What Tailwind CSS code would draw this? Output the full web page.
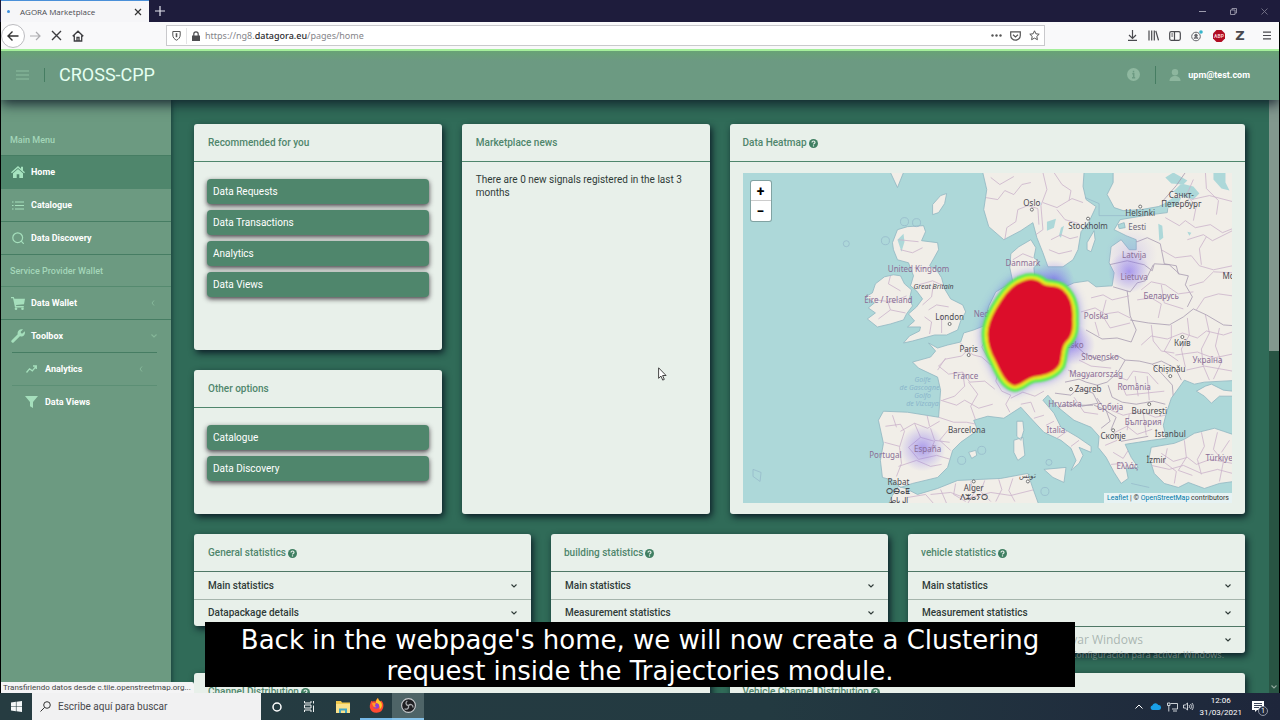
<!DOCTYPE html>
<html lang="en">

<head>
    <meta charset="UTF-8">
    <meta name="viewport" content="width=device-width, initial-scale=1.0">
    <title>AGORA Marketplace</title>
    <script src="https://cdn.jsdelivr.net/npm/@tailwindcss/browser@4"></script>
</head>

<body class="relative flex h-screen flex-col overflow-hidden bg-black font-['Roboto','Noto_Sans',sans-serif] text-[10px] leading-4">

    <!-- Shared icons -->
    <svg class="hidden">
        <symbol id="help" viewBox="0 0 9 9"><circle cx="4.500" cy="4.500" r="4.500" fill="#3f7f62" /><path d="M3 3.500c0-2 3-2 3 0 0 1-1.500 1-1.500 2M4.500 6.300v1.200" fill="none" stroke="#e8f0ea" stroke-width="1.200" /></symbol>
        <symbol id="down" viewBox="0 0 6 4"><path d="M.5.5L3 3 5.500.5" fill="none" stroke="currentColor" stroke-width="1.100" /></symbol>
        <symbol id="left" viewBox="0 0 4 6"><path d="M3 .5L1 3l2 2.500" fill="none" stroke="currentColor" /></symbol>
    </svg>

    <!-- Browser chrome -->
    <div class="flex h-[22px] shrink-0 items-stretch bg-[#1e1c3c] pl-px">
        <div class="flex w-[148px] items-center border-t border-[#4a90d9] bg-[#f6f6f8] pr-[7px] pl-1.5 text-[8px] text-[#4a4a50]">
            <span class="mr-[10px] size-[3px] rounded-full bg-[#3d8fe0]"></span>
            <span class="flex-1 font-['Open_Sans',sans-serif]">AGORA Marketplace</span>
            <button aria-label="Close tab">
                <svg class="size-2" viewBox="0 0 8 8" stroke="#333" stroke-width="1.2"><path d="M1 1l6 6M7 1l-6 6" /></svg>
            </button>
        </div>
        <button class="ml-1.5 self-center" aria-label="New tab">
            <svg class="size-[10px]" viewBox="0 0 10 10" stroke="#e4e4ee" stroke-width="1.2"><path d="M5 0v10M0 5h10" /></svg>
        </button>
        <div class="ml-auto flex items-center gap-6 pr-3">
            <svg class="size-[7px]" viewBox="0 0 7 7" stroke="#9c9bad"><path d="M0 3.5h7" /></svg>
            <svg class="size-[7px]" viewBox="0 0 7 7" fill="none" stroke="#9c9bad" stroke-width=".9"><path d="M.5 2h4.500v4.500H.5zM2 2V.5h4.500V5H5" /></svg>
            <svg class="size-[7px]" viewBox="0 0 7 7" stroke="#77768a" stroke-width=".9"><path d="M.5.5l6 6M6.500.5l-6 6" /></svg>
        </div>
    </div>
    <div class="mx-px flex h-[27px] shrink-0 items-center bg-[#f9f9fa] pr-2">
        <button class="flex size-[24px] items-center justify-center rounded-full border border-[#bcbcc0] bg-white" aria-label="Back">
            <svg class="size-3" viewBox="0 0 12 12" fill="none" stroke="#333" stroke-width="1.4"><path d="M11.500 6H1M5.500 1.500L1 6l4.500 4.500" /></svg>
        </button>
        <button class="ml-1" aria-label="Forward">
            <svg class="size-3" viewBox="0 0 12 12" fill="none" stroke="#adadb0" stroke-width="1.2"><path d="M1 6h10M7 2l4 4-4 4" /></svg>
        </button>
        <button class="ml-[10px]" aria-label="Stop">
            <svg class="size-[11px]" viewBox="0 0 11 11" stroke="#3d3d40" stroke-width="1.4"><path d="M1 1l9 9M10 1l-9 9" /></svg>
        </button>
        <button class="ml-[10px]" aria-label="Home page">
            <svg class="size-3" viewBox="0 0 12 12" fill="none" stroke="#3d3d40" stroke-width="1.3"><path d="M.7 6.300L6 1.200l5.300 5.100M2.300 5.500V11h7.400V5.500M5 11V7.500h2V11" /></svg>
        </button>
        <div class="ml-[82px] flex h-[21px] w-[879px] items-center border border-[#c9c9cc] bg-white px-1">
            <svg class="ml-px h-[11px] w-[9px]" viewBox="0 0 9 11" fill="none" stroke="#555"><path d="M.8 1.500h7.400V5c0 2.500-1.700 4.300-3.700 5.200C2.500 9.300.8 7.500.8 5z" /><path d="M4.500 3.200v4" stroke-width="1.600" /></svg>
            <span class="mx-[5px] h-4 w-px bg-[#e4e4e6]"></span>
            <svg class="h-[10px] w-2" viewBox="0 0 8 10"><path d="M0 4.500h8V10H0z" fill="#4d4d50" /><path d="M1.800 5V3a2.200 2.200 0 014.400 0v2" fill="none" stroke="#4d4d50" stroke-width="1.200" /></svg>
            <div role="textbox" aria-label="Address" class="ml-[5px] flex-1 font-['Noto_Sans',sans-serif] text-[9px] text-[#85858a]">https://ng8.<span class="font-medium text-[#2a2a2e]">datagora.eu</span>/pages/home</div>
            <svg class="h-[3px] w-[11px]" viewBox="0 0 11 3" fill="#555"><circle cx="1.500" cy="1.500" r="1.200" /><circle cx="5.500" cy="1.500" r="1.200" /><circle cx="9.500" cy="1.500" r="1.200" /></svg>
            <svg class="ml-2 h-[10px] w-[11px]" viewBox="0 0 11 10" fill="none" stroke="#555" stroke-width="1.200"><path d="M.7.8h9.600v3.700a4.800 4.600 0 01-9.600 0zM3 3.700l2.500 2.200L8 3.700" /></svg>
            <svg class="ml-2 size-[11px]" viewBox="0 0 11 11" fill="none" stroke="#555" stroke-linejoin="round"><path d="M5.500.8l1.400 3 3.300.4-2.400 2.200.6 3.300-2.900-1.600-2.900 1.600.6-3.300L.8 4.200l3.300-.4z" /></svg>
        </div>
        <div class="ml-auto flex items-center gap-[10px]">
            <svg class="size-[11px]" viewBox="0 0 11 11" fill="none" stroke="#4a4a4f" stroke-width="1.200"><path d="M5.500 0v8M2 5l3.500 3.500L9 5M1 10.300h9" /></svg>
            <svg class="size-[11px]" viewBox="0 0 11 11" fill="none" stroke="#4a4a4f" stroke-width="1.200"><path d="M1 .5v10M3.700.5v10M6.300.5v10M7.800.8l2.700 9.500" /></svg>
            <svg class="h-[10px] w-3" viewBox="0 0 12 10" fill="none" stroke="#4a4a4f" stroke-width="1.200"><rect x=".7" y=".7" width="10.600" height="8.600" rx="1.500" /><path d="M5.500 1v8M2.300 3h1.800M2.300 5h1.800" /></svg>
            <svg class="size-3" viewBox="0 0 12 12" fill="none" stroke="#66666b"><circle cx="5" cy="6.500" r="4.300" /><circle cx="5" cy="5.500" r="1.300" fill="#66666b" /><path d="M3 8.500c.8-1 3.200-1 4 0" stroke-width="1.300" /><circle cx="10" cy="2" r="1.800" fill="#35b5cc" stroke="none" /></svg>
            <svg class="size-3" viewBox="0 0 12 12"><path d="M3.500 0h5L12 3.500v5L8.500 12h-5L0 8.500v-5z" fill="#b00c22" /><text x="6" y="8" text-anchor="middle" font-size="5" font-weight="700" fill="#f6c8cc">ABP</text></svg>
            <span class="w-[10px] text-center font-['DejaVu_Sans',sans-serif] text-[13px] font-bold text-[#4a4a4f]">Z</span>
            <svg class="ml-2 h-[9px] w-2" viewBox="0 0 8 9" stroke="#4a4a4f" stroke-width="1.200"><path d="M0 1.200h8M0 4.500h8M0 7.800h8" /></svg>
        </div>
    </div>

    <!-- Web page -->
    <div class="relative mx-px flex min-h-0 flex-1 flex-col overflow-hidden bg-[#306b58]">
        <header class="relative z-10 flex h-[51px] shrink-0 items-center border-t-2 border-[#a5ef9b] bg-linear-to-b from-[#68a374] to-[#6c9a82] to-20% pr-[29px] pb-[2px] pl-[15px] shadow-[0_4px_12px_rgba(10,20,35,.85)]">
            <button aria-label="Toggle menu">
                <svg class="h-[10px] w-[13px]" viewBox="0 0 13 10" stroke="#8bbd9f" stroke-width="1.200"><path d="M0 1h13M0 5h13M0 9h13" /></svg>
            </button>
            <span class="mr-[14px] ml-[15px] h-3.5 w-px bg-[#467d62]"></span>
            <a href="#" class="text-[18px] leading-6 text-[#e4fff0]">CROSS-CPP</a>
            <div class="ml-auto flex items-center">
                <svg class="size-[13px]" viewBox="0 0 13 13"><circle cx="6.500" cy="6.500" r="6.500" fill="#8fb8a0" /><path d="M6.500 2.800v1.700M5.300 5.800h1.400v4M5 9.800h3.200" stroke="#6c9a82" stroke-width="1.500" fill="none" /></svg>
                <span class="mr-[13px] ml-[15px] h-[18px] w-px bg-[#467d62]"></span>
                <svg class="size-3" viewBox="0 0 12 12" fill="#8db69e"><circle cx="6" cy="3.300" r="3.200" /><path d="M.5 12C.5 8.500 3 7 6 7s5.500 1.500 5.500 5z" /></svg>
                <a href="#" class="ml-[7px] text-[9px] font-bold text-white">upm@test.com</a>
            </div>
        </header>

        <div class="flex min-h-0 flex-1">
            <nav class="w-[170px] shrink-0 bg-[#6c9a81] pt-6 text-[9px] font-bold text-white shadow-[1px_0_5px_rgba(10,30,40,.6)]">
                <div class="flex h-8 items-center border-b border-[#467d63] pl-[9px] font-medium text-[#a4d6b9]">Main Menu</div>
                <a href="#" class="flex h-[33px] items-center border-b border-[#4f866c] bg-[#4f866c] pl-[10px]">
                    <svg class="mr-[6px] h-3 w-[14px]" viewBox="0 0 14 12" fill="#a5e3bf"><path d="M7 0L0 6.200l.9 1L7 1.900l6.100 5.300.9-1-2-1.800V.8h-2v1.900z" /><path d="M7 2.900L2 7.300V12h3.700V8.300h2.600V12H12V7.300z" /></svg>
                    Home
                </a>
                <a href="#" class="flex h-[33px] items-center border-b border-[#467d63] pl-[11px]">
                    <svg class="mr-[7px] h-[9px] w-3" viewBox="0 0 12 9" stroke="#a5dfbc"><path d="M0 1h1.500M3 1h9M0 4.500h1.500M3 4.500h9M0 8h1.500M3 8h9" /></svg>
                    Catalogue
                </a>
                <a href="#" class="flex h-[33px] items-center border-b border-[#467d63] pl-[11px]">
                    <svg class="mr-[7px] size-3" viewBox="0 0 12 12" fill="none" stroke="#a5dfbc" stroke-width="1.200"><circle cx="5.700" cy="5.700" r="4.900" /><path d="M9.200 9.200l2.600 2.600" /></svg>
                    Data Discovery
                </a>
                <div class="flex h-8 items-center border-b border-[#558a6f] pl-[9px] font-medium text-[#a4d6b9]">Service Provider Wallet</div>
                <a href="#" class="flex h-[33px] items-center border-b border-[#467d63] pr-4 pl-[10px]">
                    <svg class="mr-[6px] size-[14px]" viewBox="0 0 14 14" fill="#a5dfbc"><path d="M0 1h2.800l.6 1.700H14l-1 5.500-8 .9.300 1h7.500v1.300H4L2 2.300H0z" /><circle cx="5" cy="12.700" r="1.300" /><circle cx="11.500" cy="12.700" r="1.300" /></svg>
                    Data Wallet
                    <svg class="ml-auto h-[6px] w-1 text-[#86b799]"><use href="#left" /></svg>
                </a>
                <a href="#" class="flex h-8 items-center pr-[14px] pl-[10px]">
                    <svg class="mr-[6px] size-[14px]" viewBox="0 0 14 14"><path d="M1.800 12.200l6-6" stroke="#a5dfbc" stroke-width="3" stroke-linecap="round" /><path d="M12 .5L9.700 2.800l.3 1.500 1.500.3L13.700 2.300c.8 2-.2 4.200-2 5-2 .8-4.300-.2-5-2C5.900 2.500 8.500-.5 12 .5z" fill="#a5dfbc" /></svg>
                    Toolbox
                    <svg class="ml-auto h-1 w-[6px] text-[#86b799]"><use href="#down" /></svg>
                </a>
                <div class="mr-[14px] ml-[11px] border-t border-[#467d63]">
                    <a href="#" class="flex h-[33px] items-center border-b border-[#5c8f75] pr-[14px] pl-[14px]">
                        <svg class="mr-2 h-2 w-[11px]" viewBox="0 0 11 8" fill="none" stroke="#a5dfbc" stroke-width="1.300"><path d="M.5 7.500L3.500 3.800l2.800 2L10 1.500M7 1h3.300v3" /></svg>
                        Analytics
                        <svg class="ml-auto h-[6px] w-1 text-[#86b799]"><use href="#left" /></svg>
                    </a>
                    <a href="#" class="flex h-8 items-center pl-[13px]">
                        <svg class="mr-[7px] h-3 w-[13px]" viewBox="0 0 13 12" fill="#a5dfbc"><path d="M0 0h13L8 6v6L5 10.300V6z" /></svg>
                        Data Views
                    </a>
                </div>
            </nav>

            <main class="min-w-0 flex-1 space-y-5 overflow-hidden pt-6 pr-6 pl-[23px] text-[#2f3b38]">
                <div class="grid grid-cols-4 gap-5">
                    <div class="flex flex-col gap-5">
                        <section class="h-[226px] rounded-[3px] bg-[#e8f0ea] shadow-[2px_3px_7px_rgba(8,20,32,.9)]">
                            <h2 class="border-b border-[#4f866c] px-[14px] pt-[11px] pb-[10px] font-medium text-[#4f866c]">Recommended for you</h2>
                            <div class="space-y-[6px] px-[13px] pt-[17px] text-white">
                                <button class="block h-[25px] w-full rounded-[4px] bg-[#4f866c] px-[6px] text-left shadow-[0_2px_5px_rgba(30,20,30,.8)]">Data Requests</button>
                                <button class="block h-[25px] w-full rounded-[4px] bg-[#4f866c] px-[6px] text-left shadow-[0_2px_5px_rgba(30,20,30,.8)]">Data Transactions</button>
                                <button class="block h-[25px] w-full rounded-[4px] bg-[#4f866c] px-[6px] text-left shadow-[0_2px_5px_rgba(30,20,30,.8)]">Analytics</button>
                                <button class="block h-[25px] w-full rounded-[4px] bg-[#4f866c] px-[6px] text-left shadow-[0_2px_5px_rgba(30,20,30,.8)]">Data Views</button>
                            </div>
                        </section>
                        <section class="h-[144px] rounded-[3px] bg-[#e8f0ea] shadow-[2px_3px_7px_rgba(8,20,32,.9)]">
                            <h2 class="border-b border-[#4f866c] px-[14px] pt-[11px] pb-[10px] font-medium text-[#4f866c]">Other options</h2>
                            <div class="space-y-[6px] px-[13px] pt-[17px] text-white">
                                <button class="block h-[25px] w-full rounded-[4px] bg-[#4f866c] px-[6px] text-left shadow-[0_2px_5px_rgba(30,20,30,.8)]">Catalogue</button>
                                <button class="block h-[25px] w-full rounded-[4px] bg-[#4f866c] px-[6px] text-left shadow-[0_2px_5px_rgba(30,20,30,.8)]">Data Discovery</button>
                            </div>
                        </section>
                    </div>
                    <section class="rounded-[3px] bg-[#e8f0ea] shadow-[2px_3px_7px_rgba(8,20,32,.9)]">
                        <h2 class="border-b border-[#4f866c] px-[14px] pt-[11px] pb-[10px] font-medium text-[#4f866c]">Marketplace news</h2>
                        <p class="px-[14px] pt-[11px] leading-[13px]">There are 0 new signals registered in the last 3 months</p>
                    </section>
                    <section class="col-span-2 rounded-[3px] bg-[#e8f0ea] shadow-[2px_3px_7px_rgba(8,20,32,.9)]">
                        <h2 class="flex items-center gap-[2px] border-b border-[#4f866c] px-[13px] pt-[11px] pb-[10px] font-medium text-[#4f866c]">Data Heatmap <svg class="size-[9px]"><use href="#help" /></svg></h2>
                        <div class="relative mx-[13px] mt-[11px] h-[330px] overflow-hidden bg-[#add8d9]">
                            <svg class="h-full w-full" viewBox="743 173 488 330" preserveAspectRatio="xMidYMid slice" font-family="'Noto Sans', sans-serif" font-size="8">
                                <defs>
                                    <filter id="soft" x="-20%" y="-20%" width="140%" height="140%"><feGaussianBlur stdDeviation="1.200" /></filter>
                                    <filter id="glow" x="-30%" y="-30%" width="160%" height="160%"><feGaussianBlur stdDeviation="4" /></filter>
                                    <radialGradient id="spot"><stop offset="0" stop-color="#7c64ee" stop-opacity=".6" /><stop offset="1" stop-color="#8a78f0" stop-opacity="0" /></radialGradient>
                                    <clipPath id="landClip"><use href="#land" /></clipPath>
                                    <path id="heat" d="M1021 280C1028 277 1037 277 1043 283C1049 286 1056 283 1063 289C1071 296 1074 307 1073 320C1074 331 1072 338 1066 343C1061 348 1063 357 1060 365C1055 374 1045 377 1034 378C1026 379 1022 386 1014 387C1004 386 998 372 993 361C987 350 984 340 986 328C988 317 993 309 999 300C1005 291 1012 283 1021 280Z" />
                                </defs>
                                <!-- land masses -->
                                <path id="land" fill="#f1eee8" stroke="#91b6c2" stroke-width=".8" stroke-linejoin="round" d="M897 230L907 227L923 226L925 232L921 241L937 243L938 250L933 259L929 266L936 270L941 278L944 289L950 299L962 305L965 312L960 321L957 330L946 335L934 335L923 338L912 341L903 343L909 336L919 331L920 327L907 327L914 321L908 314L916 307L922 299L916 291L910 286L913 276L908 263L897 260L893 250L892 243ZM893 275L900 276L904 284L911 290L909 299L912 306L906 314L903 320L890 324L877 327L867 319L875 313L868 308L874 303L865 297L872 293L875 284L884 277ZM932 205L940 196L946 194L944 204L938 213L932 215ZM982 173L986 190L983 210L988 227L1003 240L1020 231L1032 223L1036 238L1042 253L1047 267L1062 267L1072 260L1077 250L1080 232L1088 222L1095 207L1085 200L1082 187L1083 173ZM1112 173L1112 183L1106 195L1113 208L1122 211L1140 210L1157 207L1167 203L1166 213L1150 215L1137 217L1119 220L1113 230L1125 236L1135 240L1135 250L1128 250L1120 240L1110 247L1108 263L1113 273L1111 286L1095 287L1087 281L1073 283L1062 288L1045 285L1034 280L1033 268L1038 262L1033 258L1035 248L1030 240L1018 247L1010 254L1009 268L1012 282L995 292L988 306L983 326L973 330L963 333L960 342L947 345L937 348L928 343L935 351L930 357L912 362L918 368L937 377L940 390L938 417L907 412L883 411L878 420L883 443L880 460L882 477L893 480L900 487L912 483L937 477L947 467L952 450L960 442L977 430L973 420L987 416L1003 418L1020 407L1029 417L1043 432L1060 440L1070 448L1075 460L1070 470L1078 463L1082 455L1078 447L1090 452L1090 446L1077 437L1060 427L1053 413L1042 400L1047 395L1057 407L1073 420L1090 427L1098 436L1097 447L1105 457L1113 472L1120 483L1127 478L1125 468L1137 467L1130 457L1124 444L1137 442L1150 440L1165 438L1162 425L1165 413L1170 398L1183 380L1193 384L1203 382L1240 380V173ZM1195 391L1204 386L1210 384L1222 390L1240 392L1240 396L1218 396L1210 403L1203 396ZM1240 437L1222 431L1213 428L1193 433L1183 439L1173 443L1150 447L1148 457L1153 473L1163 483L1177 487L1187 482L1203 488L1218 483L1240 480ZM1043 469L1065 467L1063 482L1052 477ZM1016 421L1022 421L1023 430L1020 440L1016 436ZM1013 440L1022 437L1024 455L1017 460L1013 452ZM885 510L892 495L898 486L905 488L917 494L937 488L957 480L1000 478L1027 473L1030 482L1032 488L1040 510ZM968 452L975 450L976 455L971 458ZM1086 243L1093 231L1094 240L1090 252L1086 250ZM890 173L897 188L903 173ZM1117 225L1123 223L1124 228L1118 229Z" />
                                <!-- coastal waters and lakes -->
                                <path fill="#add8d9" d="M1164 178l8-5 14 8-4 4-12-1zM1212 173h12v10l4 8-8-2-8-9zM1157 224l4 2 1 12-4 3zM1186 232l4 1-2 3zM1046 222l9-3-2 9-7 3zM1060 228l3-2-3 12-2-2zM1172 192l8-8 12 3 6 7-6 6-12-3zM897 240l6-6 1 8-3 10zM1160 206l12-8 8 0-4 8-10 3z" />
                                <g clip-path="url(#landClip)" fill="none" stroke="#cbb3cb" stroke-width=".8" stroke-linejoin="round">
                                    <path d="M985 198l12 2 7-9 9 4 8-10 9-2M1004 240l2-12 9-6 2-12 10-4 10 3 1 16M1042 173l4 17-6 16 2 24-7 5M1042 203l14 5 15-9 11 4M1050 240l10-5 9 4 8-2M1048 250l10 4 13-3M1056 210l8 10 14 4M1053 173l8 12 9 6-2 10M990 178l9 7 14-8M1012 260l10-6 10 4" />
                                    <path stroke="#a89bb0" d="M1184 173l-9 13-14 16M1108 265l18-4 17 4 8 6 2-7 15 1 10 9M1120 240l16 2 10-4 13 6 4 20 12 2 2 8 10 2-3 9 7 12-5 10M1112 287l17 5 7-9 8-2 8-16M1126 291l3 25 6 14-5 12-14-4-15 1-16-9M1129 320l18 3 21 2 14-8 10-8 13 6 17 10 14 1M1061 350l13-5 10 9 17 7 16-5 7 4-7 12-11 10-10 3-11-3-7-3-14 3M1124 360l14 1 13 3 10 10 10 11 1 12M1151 364l9-3 14 7 6 12M1107 385l4 12 10 5 14 2 17-3 12 3M1096 398l8 12 11 7-5 12 10 12 27-5M1093 405l12 5 4 11-9 7M1054 393l16 2 7-7 15 5 5 10-16 3M1057 407l9-2 26 0" />
                                    <path d="M1160 250l14 8 16-2 8 10 14 4 19-4M1164 218l14 8 6-5 10 7 15-3 12 8 10-4M1192 180l-7 16 10 10-3 15M1204 173l1 16 12 12-2 14M1190 200l18-4 23 6M1186 240l16-5 9 6 20-10M1200 265l-2-16 7-12M1188 286l14-4 10-10 19 1M1195 310l8-12 14-4 14 2M1090 298l12-3 9 5 17-4M1080 312l14-4 10 6 13-2 12 6M1094 322l4 14M1105 300l-4 15 8 13 20-5M1140 290l10-8 14 3 13 9 15-2M1136 300l14-2 10 6-3 14M1160 285l3 18 19 6M1140 345l10-9 16 3 15-6 15 5 9-7 17 4 9-3M1150 325l2 16 8 10 13 2M1170 325l0 13-7 13 14 10M1186 318l2 17-8 14 4 18M1204 315l4 18-8 16 2 17 6 14M1218 328l-4 18 6 16-8 17M1174 355l22-3 16 6 19-4M1185 370l18-4 28 5M1112 375l14 5 6-9 15 2 10 11M1120 383l5 12M1134 376l3 20M1146 376l2 24M1125 395l38-4M1110 410l12 5 17-4 15 6 10-2M1128 414l-2 16M1142 412l3 23M1114 432l12-6 10 8 15-5M1073 397l10 15 14 2M1078 360l12 6 20 2M1067 370l15 6 15 0" />
                                    <path d="M960 343l6 8 7 4 8 2 8 7 10 3-4 14 6 10 9 4-5 9 4 8M969 348l-8 8-16 3-7 7 10 8 14-2 7 10 15-1 10 8M945 358l-8 12M962 372l2 14-10 10-12 4M968 382l9 12-7 12 5 14M940 400l16 5 8-5 14 8 14-4M938 417l15 5 13 0 10 2M885 426l15-2 4 7-5 16 2 16-5 13M884 442l15 4M900 431l14-8 13 5 12-7M914 423l6 14-12 10 10 12 18-4 14 4M930 428l4 12 15 2M898 466l18-6 14 6 11-2M920 437l14 4-6 12M949 428l-10 12 11 10M892 415l4 12M926 413l3 13M900 250l12 3 10-5M898 240l20 2M914 268l14 0M918 285l14-4 9 4M922 305l9-8 2-14M928 310l8-5 12 2M929 334l2-12-7-5M941 333l0-17M890 276l-2 8 12 7M874 300l18 2 14-6M878 319l12-9 15 3M890 310l-4-12M1010 398l12-6 12 4 9-5M1020 404l10-2 4 10M1033 418l10-3M1045 425l8-4M1056 438l10-7M1070 446l8-6M988 315l-6 8 5 12-6 12 8 14" />
                                    <path d="M907 497l18-3 8 9M940 489l6 14M955 483l-2 11 12 7M970 481l3 12-6 10M984 480l-4 11 10 10M998 479l3 10-6 12M1012 478l-4 12 6 11M930 494l20-2 16 6 24-6 20 3 24-6M1160 453l12 8 14-4 9 7 14-5 22 4M1166 448l-3 14 12 9-2 12M1183 440l2 17-8 13 14 5M1200 432l3 14-7 13 4 15M1216 432l-4 17 10 12-4 20M1150 465l18 4 14-4 18 8 16-4 15 4M1228 440l-8 12M1112 452l10 6 5-8M1110 464l12-1M1104 445l12-5" />
                                </g>
                                <g fill="none" stroke="#94b6c8" stroke-width=".7">
                                    <circle cx="846" cy="244" r="3" /><circle cx="904" cy="222" r="4" /><circle cx="916" cy="223" r="4" /><circle cx="885" cy="241" r="4" /><circle cx="961" cy="460" r="4" /><circle cx="981" cy="450" r="4" /><circle cx="1044" cy="491" r="4" /><circle cx="1048" cy="462" r="3" /><path d="M753 469l8 3-1 9-7-5zM1084 198l14 6 0 12M1098 216h32M1130 483l18 4M1148 495l12-2" />
                                </g>
                                <!-- heat layer -->
                                <circle cx="1128" cy="272" r="21" fill="url(#spot)" />
                                <circle cx="1130" cy="255" r="26" fill="url(#spot)" opacity=".35" />
                                <circle cx="922" cy="448" r="23" fill="url(#spot)" />
                                <circle cx="1074" cy="345" r="20" fill="url(#spot)" />
                                <circle cx="1053" cy="280" r="20" fill="url(#spot)" />
                                <g fill="#8a6f96">
                                    <text x="1060" y="348">Česko</text>
                                    <text x="973" y="317">Ned</text>
                                </g>
                                <use href="#heat" fill="#5c4de0" stroke="#5c5ae8" stroke-width="11" opacity=".5" filter="url(#glow)" />
                                <g filter="url(#soft)" stroke-linejoin="round">
                                    <use href="#heat" fill="none" stroke="#56f04e" stroke-width="9" />
                                    <use href="#heat" fill="#dc0a2b" stroke="#e8ec1c" stroke-width="3" />
                                </g>
                                <!-- labels -->
                                <g text-anchor="middle" fill="#8a6f96">
                                    <text x="918" y="272">United Kingdom</text>
                                    <text x="888" y="303">Éire / Ireland</text>
                                    <text x="1022" y="266">Danmark</text>
                                    <text x="1136" y="230" fill="#6d6878">Eesti</text>
                                    <text x="1133" y="258">Latvija</text>
                                    <text x="1133" y="280">Lietuva</text>
                                    <text x="1160" y="299">Беларусь</text>
                                    <text x="1095" y="319">Polska</text>
                                    <text x="965" y="379">France</text>
                                    <text x="927" y="452">España</text>
                                    <text x="885" y="458">Portugal</text>
                                    <text x="1099" y="360">Slovensko</text>
                                    <text x="1095" y="377">Magyarország</text>
                                    <text x="1133" y="390">România</text>
                                    <text x="1206" y="363">Україна</text>
                                    <text x="1064" y="407">Hrvatska</text>
                                    <text x="1109" y="410">Србија</text>
                                    <text x="1142" y="425">България</text>
                                    <text x="1055" y="433">Italia</text>
                                    <text x="1126" y="469">Ελλάς</text>
                                    <text x="1204" y="461" text-anchor="start">Türkiye</text>
                                </g>
                                <g text-anchor="middle" fill="#4a4a50">
                                    <text x="1031" y="206">Oslo</text>
                                    <text x="1087" y="229">Stockholm</text>
                                    <text x="1139" y="216">Helsinki</text>
                                    <text x="1180" y="198">Санкт-</text>
                                    <text x="1180" y="207">Петербург</text>
                                    <text x="1221" y="279" text-anchor="start">Мо</text>
                                    <text x="933" y="289" font-style="italic" font-size="7">Great Britain</text>
                                    <text x="949" y="320">London</text>
                                    <text x="968" y="352">Paris</text>
                                    <text x="966" y="433">Barcelona</text>
                                    <text x="898" y="485">Rabat</text>
                                    <text x="898" y="494">ⵔⴱⴰⵟ</text>
                                    <text x="898" y="503">الرباط</text>
                                    <text x="973" y="491">Alger</text>
                                    <text x="973" y="500">ⴷⵣⴰⵢⵔ</text>
                                    <text x="1027" y="478" font-size="7">تونس</text>
                                    <text x="1087" y="392">Zagreb</text>
                                    <text x="1181" y="346">Київ</text>
                                    <text x="1168" y="372">Chișinău</text>
                                    <text x="1148" y="414">București</text>
                                    <text x="1112" y="439">Скопје</text>
                                    <text x="1169" y="437">İstanbul</text>
                                    <text x="1155" y="463">İzmir</text>
                                </g>
                                <g text-anchor="middle" fill="#8ab5cb" font-style="italic" font-size="7">
                                    <text x="922" y="382">Golfe</text><text x="919" y="390">de Gascogne</text><text x="922" y="398">Golfo</text><text x="922" y="406">de Vizcaya</text>
                                </g>
                                <g fill="#fff" stroke="#555" stroke-width=".8">
                                    <circle cx="1031" cy="210" r="1.500" /><circle cx="1087" cy="219" r="1.500" /><circle cx="1139" cy="207" r="1.500" /><circle cx="949" cy="324" r="1.500" /><circle cx="968" cy="355" r="1.500" /><circle cx="1181" cy="337" r="1.500" /><circle cx="1169" cy="376" r="1.500" /><circle cx="1148" cy="404" r="1.500" /><circle cx="1112" cy="430" r="1.500" /><circle cx="1070" cy="389" r="1.500" /><circle cx="973" cy="481" r="1.500" /><circle cx="1027" cy="481" r="1.500" />
                                </g>
                            </svg>
                            <div class="absolute top-2 left-2 flex w-5 flex-col rounded-[2px] bg-white text-center text-[14px] leading-5 font-bold text-black shadow-[0_0_0_1px_rgba(0,0,0,.25)]">
                                <button class="h-5 border-b border-[#ccc]" aria-label="Zoom in">+</button>
                                <button class="h-5" aria-label="Zoom out">−</button>
                            </div>
                            <div class="absolute right-0 bottom-0 bg-white/70 px-[3px] text-[7px] leading-[10px] text-[#333]"><a href="#" class="text-[#0078a8]">Leaflet</a> | © <a href="#" class="text-[#0078a8]">OpenStreetMap</a> contributors</div>
                        </div>
                    </section>
                </div>

                <div class="grid grid-cols-3 items-start gap-5">
                    <section class="rounded-[3px] bg-[#e8f0ea] font-medium shadow-[2px_3px_7px_rgba(8,20,32,.9)]">
                        <h2 class="flex items-center gap-[2px] px-[14px] pt-[11px] pb-[10px] text-[#4f866c]">General statistics <svg class="size-[9px]"><use href="#help" /></svg></h2>
                        <button class="flex h-[28px] w-full items-center justify-between border-t border-[#4f7766] px-[14px]">Main statistics <svg class="h-1 w-[6px]"><use href="#down" /></svg></button>
                        <button class="flex h-[27px] w-full items-center justify-between border-t border-[#a5b5ac] px-[14px]">Datapackage details <svg class="h-1 w-[6px]"><use href="#down" /></svg></button>
                    </section>
                    <section class="rounded-[3px] bg-[#e8f0ea] font-medium shadow-[2px_3px_7px_rgba(8,20,32,.9)]">
                        <h2 class="flex items-center gap-[2px] px-[13px] pt-[11px] pb-[10px] text-[#4f866c]">building statistics <svg class="size-[9px]"><use href="#help" /></svg></h2>
                        <button class="flex h-[28px] w-full items-center justify-between border-t border-[#4f7766] px-[14px]">Main statistics <svg class="h-1 w-[6px]"><use href="#down" /></svg></button>
                        <button class="flex h-[27px] w-full items-center justify-between border-t border-[#a5b5ac] px-[14px]">Measurement statistics <svg class="h-1 w-[6px]"><use href="#down" /></svg></button>
                    </section>
                    <section class="rounded-[3px] bg-[#e8f0ea] font-medium shadow-[2px_3px_7px_rgba(8,20,32,.9)]">
                        <h2 class="flex items-center gap-[2px] px-[13px] pt-[11px] pb-[10px] text-[#4f866c]">vehicle statistics <svg class="size-[9px]"><use href="#help" /></svg></h2>
                        <button class="flex h-[28px] w-full items-center justify-between border-t border-[#4f7766] px-[14px]">Main statistics <svg class="h-1 w-[6px]"><use href="#down" /></svg></button>
                        <button class="flex h-[27px] w-full items-center justify-between border-t border-[#a5b5ac] px-[14px]">Measurement statistics <svg class="h-1 w-[6px]"><use href="#down" /></svg></button>
                        <button class="flex h-[27px] w-full items-center justify-end border-t border-[#4f7766] px-[14px]" aria-label="More statistics"><svg class="h-1 w-[6px]"><use href="#down" /></svg></button>
                    </section>
                </div>

                <div class="grid grid-cols-2 gap-5">
                    <section class="h-[200px] rounded-[3px] bg-[#e8f0ea] shadow-[2px_3px_7px_rgba(8,20,32,.9)]">
                        <h2 class="flex items-center gap-[2px] px-[14px] pt-[11px] pb-[10px] font-medium text-[#4f866c]">Channel Distribution <svg class="size-[9px]"><use href="#help" /></svg></h2>
                    </section>
                    <section class="h-[200px] rounded-[3px] bg-[#e8f0ea] shadow-[2px_3px_7px_rgba(8,20,32,.9)]">
                        <h2 class="flex items-center gap-[2px] px-[13px] pt-[11px] pb-[10px] font-medium text-[#4f866c]">Vehicle Channel Distribution <svg class="size-[9px]"><use href="#help" /></svg></h2>
                    </section>
                </div>
            </main>

            <!-- Scrollbar -->
            <div class="flex w-[10px] shrink-0 flex-col items-center justify-between bg-[#285443] pb-1">
                <div class="h-[251px] w-full bg-[#82988e]"></div>
                <svg class="h-1 w-[6px] text-[#8fa89c]"><use href="#down" /></svg>
            </div>
        </div>
        <div class="absolute bottom-0 left-0 z-20 h-[11px] rounded-tr-[2px] bg-[#f4f4f5] pr-[3px] pl-[2px] text-[8px] leading-[11px] text-[#444]">Transfiriendo datos desde c.tile.openstreetmap.org...</div>
    </div>

    <!-- Taskbar -->
    <div class="flex h-[27px] shrink-0 items-stretch bg-linear-to-r from-[#263c41] via-[#233a41] via-60% to-[#1e263b] pr-4">
        <button class="flex w-8 items-center justify-center" aria-label="Start">
            <svg class="size-[11px]" viewBox="0 0 11 11" fill="#f4f8f8"><path d="M0 1.500l4.900-.7v4.400H0zM5.500.7L11 0v5.200H5.500zM0 5.800h4.900v4.400L0 9.500zM5.500 5.800H11V11l-5.500-.8z" /></svg>
        </button>
        <div class="flex w-[229px] items-center bg-[#f1f1f2] pl-2">
            <svg class="mr-[7px] size-[11px] shrink-0" viewBox="0 0 11 11" fill="none" stroke="#333"><circle cx="7" cy="4" r="3.300" /><path d="M4.600 6.400L.5 10.500" /></svg>
            <input type="text" aria-label="Buscar" placeholder="Escribe aquí para buscar" class="w-full outline-none placeholder:text-[#48484c]">
        </div>
        <button class="flex w-8 items-center justify-center" aria-label="Cortana"><svg class="size-[10px]" viewBox="0 0 10 10" fill="none" stroke="#fff" stroke-width="1.500"><circle cx="5" cy="5" r="4" /></svg></button>
        <button class="flex w-8 items-center justify-center" aria-label="Task view"><svg class="size-[11px]" viewBox="0 0 11 11" fill="none" stroke="#eef2f2"><path d="M.5 0v2h6.500V0M.5 11V9h6.500v2M.5 4h6.500v3H.5zM9.500 0v2.500M9.500 4.500V11" /></svg></button>
        <button class="flex w-[35px] items-center justify-center" aria-label="File explorer"><svg class="h-3 w-[14px]" viewBox="0 0 14 12"><path d="M0 0h5l1 1.500h8V12H0z" fill="#f2c94c" /><path d="M0 3h14v9H0z" fill="#fbe28a" /><path d="M3 7.500h8V12H9V9.500H5V12H3z" fill="#45a7c4" /></svg></button>
        <button class="flex w-8 items-center justify-center border-b-2 border-[#76b9e8]" aria-label="Firefox"><svg class="size-[15px]" viewBox="0 0 15 15"><path d="M1.500 5C2 2.500 3 2 3 3.500c1.500-.5 2-.5 3.500 0C6.700 2 8 .8 9 0c.2 1.700 1 2.300 2.500 3.500.5-.2.5-.7.400-1.200C14 4 14.800 6.500 14.300 9A6.900 6.900 0 01.8 9.500C.6 8 .9 6.500 1.500 5z" fill="#ff4a32" /><path d="M9 0c.2 1.700 1 2.300 2.500 3.500 2.500 3 1.500 6.500-1 8 1-3-1-6-3.500-6.500C7 3 7.700 1 9 0z" fill="#ffc928" /><circle cx="7.300" cy="8" r="2.800" fill="#8f40d8" /><path d="M3 5c2-.5 3 .3 4.500 1-2 0-2 2.500 0 3-2 1-4-.5-4.500-4z" fill="#ff9b28" /></svg></button>
        <button class="flex w-8 items-center justify-center border-b-2 border-[#86c3ea] bg-[#4e6467]" aria-label="OBS Studio"><svg class="size-[15px]" viewBox="0 0 15 15"><circle cx="7.500" cy="7.500" r="6.900" fill="#1f1f22" stroke="#c9cccf" stroke-width="1.100" /><g fill="none" stroke="#a9acaf" stroke-width="1.300"><path d="M7.500 7.500C4.500 7 4.300 4.200 6.300 3M7.500 7.500c2.200-2 4.700-.6 4.500 2M7.500 7.500c.7 3-1.800 4.500-4 3.200" /></g></svg></button>
        <div class="ml-auto flex items-center text-[8px] text-white">
            <svg class="mr-[7px] h-[5px] w-2" viewBox="0 0 8 5" fill="none" stroke="#fff"><path d="M.5 4.500L4 1l3.500 3.500" /></svg>
            <svg class="mr-[6px] h-[7px] w-[11px]" viewBox="0 0 11 7" fill="#1aa0e8"><path d="M2.500 7a2.300 2.300 0 01-.2-4.500A3.300 3.300 0 018.300 2 2.500 2.500 0 018.700 7z" /></svg>
            <svg class="mr-[5px] h-[10px] w-[11px]" viewBox="0 0 11 10" fill="none" stroke="#dfe3e8" stroke-width=".9"><path d="M3.500 1.500h7v5.500H5M6 9h4M.5 1h2.500v2.500H.5zM1.800 3.500V9.500" /></svg>
            <svg class="mr-[5px] h-[9px] w-[11px]" viewBox="0 0 11 9" fill="none" stroke="#dfe3e8" stroke-width=".9"><path d="M.5 3h1.800L4.500 1v7L2.300 6H.5zM6 3c.7 1 .7 2 0 3M7.500 2c1.200 1.500 1.200 3.500 0 5M9 1c1.700 2 1.700 5 0 7" /></svg>
            <div class="mr-[10px] text-center leading-3">12:06<br>31/03/2021</div>
            <div class="relative">
                <svg class="h-[11px] w-3" viewBox="0 0 12 11"><path d="M0 0h12v9H5l-2 2V9H0z" fill="#fff" /><path d="M2 2.500h8M2 4.500h8M2 6.500h5" stroke="#263048" stroke-width=".9" /></svg>
                <span class="absolute -right-1 -bottom-1 flex size-[10px] items-center justify-center rounded-full border border-[#8f96a5] bg-[#222a3e] text-[7px]">1</span>
            </div>
        </div>
    </div>

    <!-- Windows watermark -->
    <div class="absolute right-[56px] bottom-[59px] font-['Open_Sans',sans-serif] text-[#8f9c98]/70">
        <div class="text-[12px] leading-[18px]">Activar Windows</div>
        <div class="text-[9px] leading-3">Ve a Configuración para activar Windows.</div>
    </div>

    <!-- Mouse pointer -->
    <svg class="absolute top-[367px] left-[658px] h-[14px] w-[9px]" viewBox="0 0 9 14"><path d="M.6.8v10.500l2.400-2.200 1.700 4 1.600-.7-1.700-3.900h3.500z" fill="#fff" stroke="#333" stroke-width=".9" /></svg>

    <!-- Subtitles -->
    <p class="absolute bottom-[33px] left-1/2 z-30 w-[870px] -translate-x-1/2 bg-black px-5 pt-[3px] text-center font-['DejaVu_Sans',sans-serif] text-[26px] leading-[31px] text-white">Back in the webpage's home, we will now create a Clustering<br>request inside the Trajectories module.</p>
</body>

</html>
